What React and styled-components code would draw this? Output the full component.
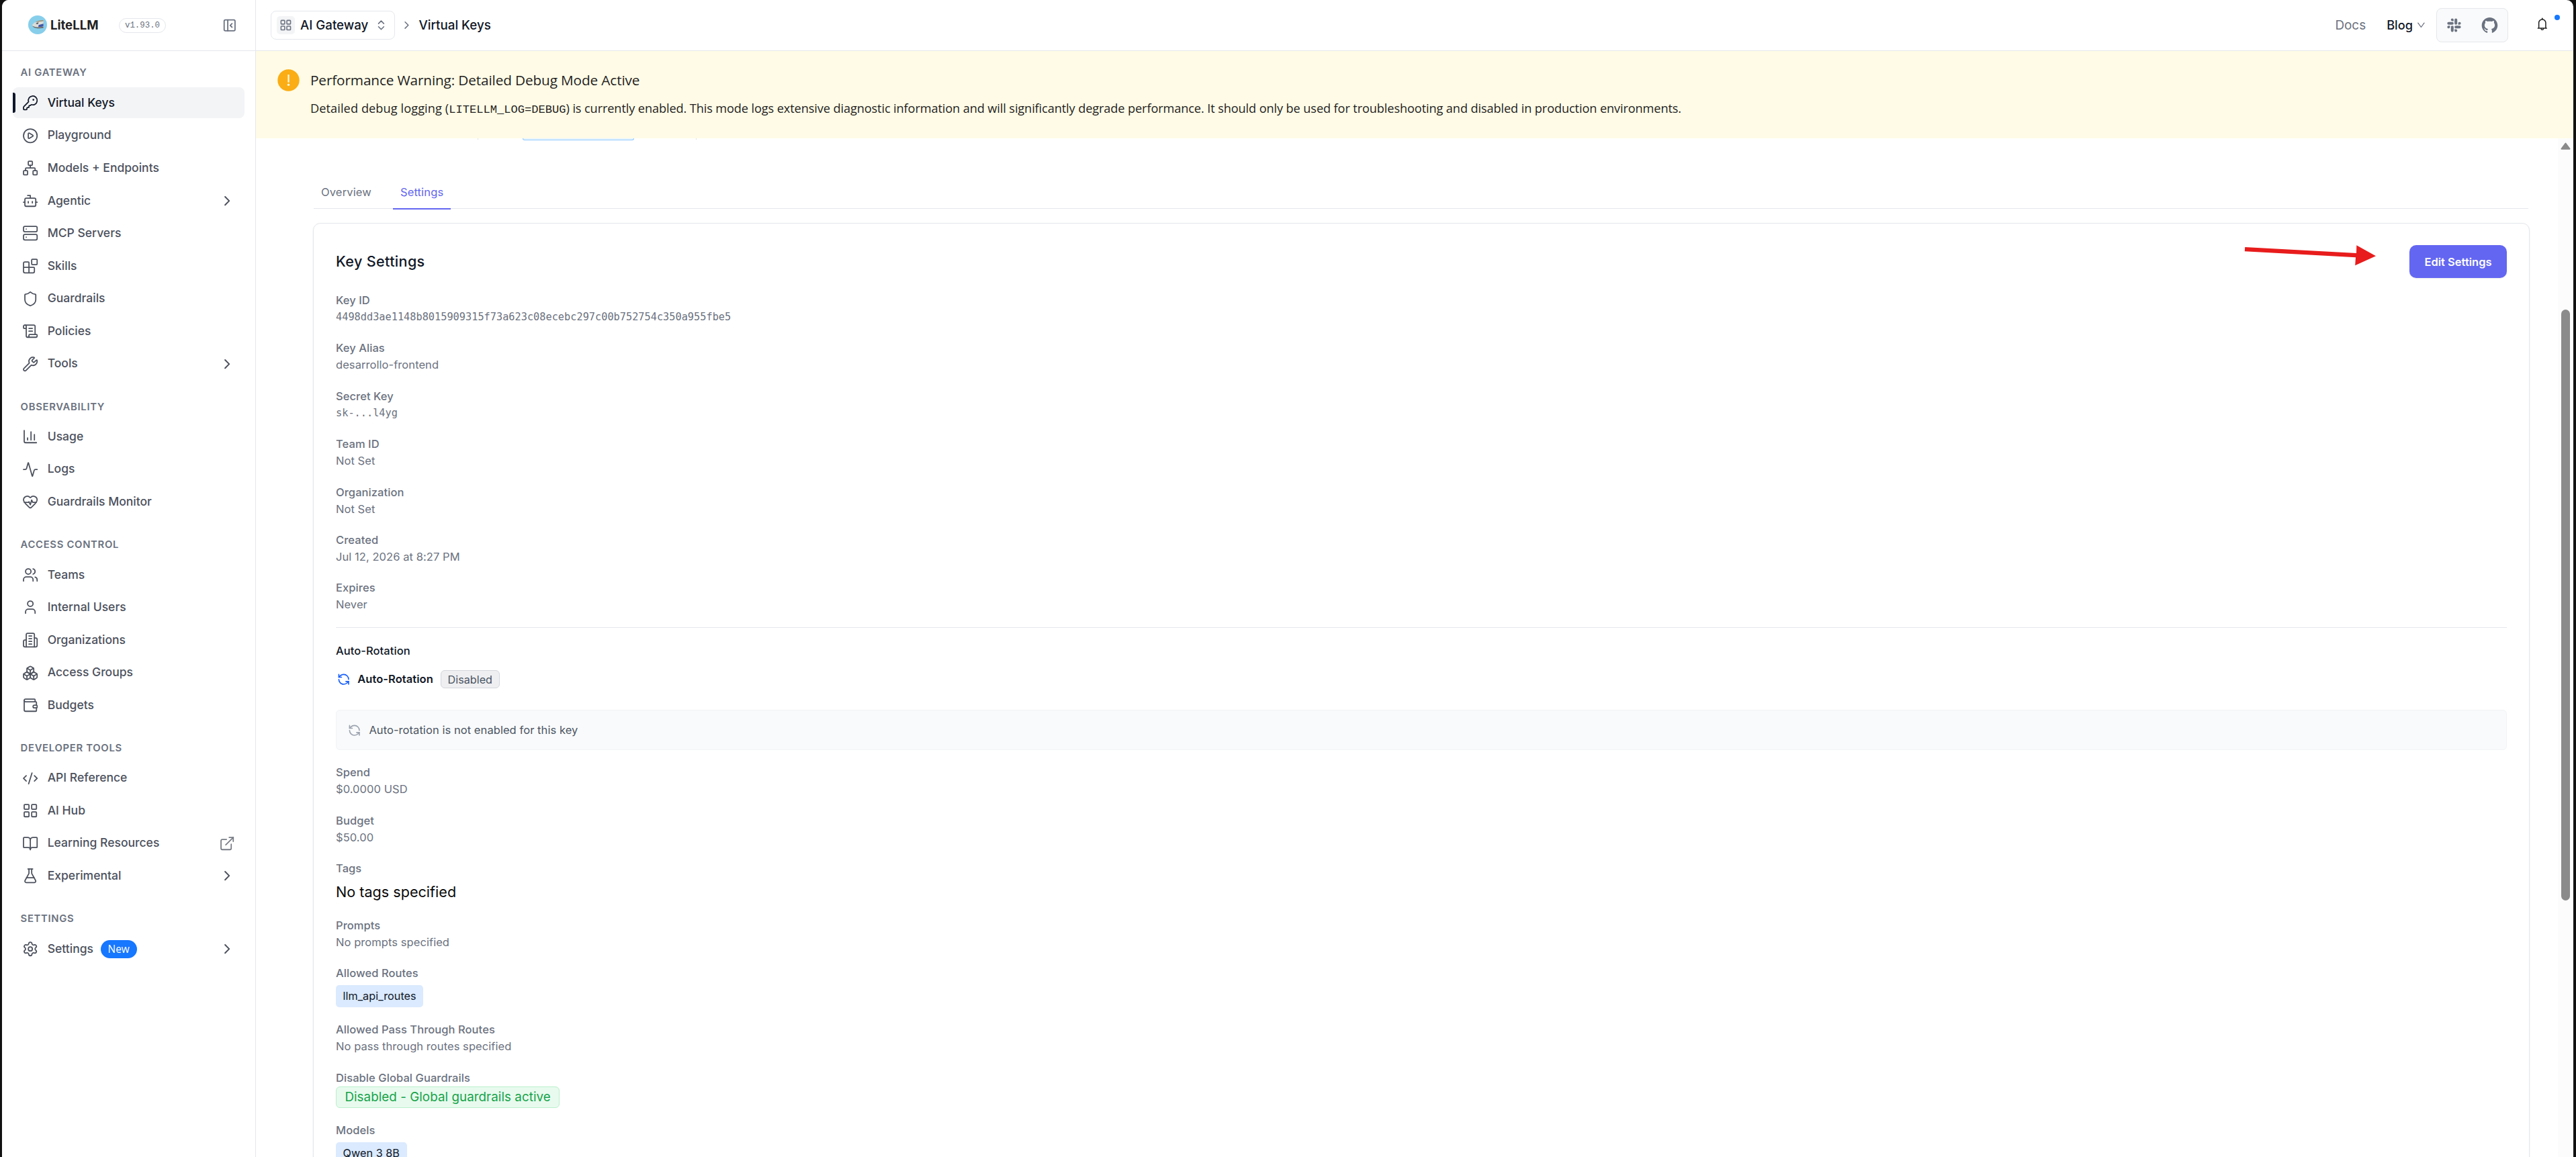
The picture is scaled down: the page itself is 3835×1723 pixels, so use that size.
import React from "react";
import styled, { createGlobalStyle, css } from "styled-components";
import {
  Activity,
  BookOpen,
  Blocks,
  Bot,
  Boxes,
  ChevronRight,
  ChevronsUpDown,
  CirclePlay,
  CodeXml,
  ExternalLink,
  FlaskConical,
  HeartPulse,
  KeyRound,
  LayoutGrid,
  Network,
  PanelLeftClose,
  RefreshCcw,
  ScrollText,
  Server,
  Settings,
  Shield,
  User,
  Users,
  Wallet,
  Wrench,
} from "lucide-react";
import { AiFillGithub, AiOutlineBell, AiOutlineDown, AiOutlineSlack } from "react-icons/ai";

const inter = `Inter, "Liberation Sans", sans-serif`;
const humanist = `"Open Sans", "Noto Sans", sans-serif`;
const mono = `"DejaVu Sans Mono", "Liberation Mono", monospace`;

const c = {
  line: "#e5e7eb",
  ink: "#111827",
  nav: "#4c515d",
  body: "#4b5563",
  muted: "#6b7280",
  accent: "#6366f1",
  blue: "#1677ff",
};

const GlobalStyle = createGlobalStyle`
  *, *::before, *::after { box-sizing: border-box; }
  html { background: #111; }
  body {
    margin: 0;
    font-family: ${inter};
    color: ${c.ink};
  }
  svg { display: block; flex: none; }
`;

/* ---------- Window ---------- */

const Desktop = styled.div`
  width: 3835px;
  height: 1723px;
  padding: 0 4px 0 3px;
  background: #111;
  overflow: hidden;
`;

const Window = styled.div`
  display: flex;
  width: 100%;
  height: 100%;
  background: #fff;
  border-radius: 10px 10px 0 0;
  overflow: hidden;
`;

/* ---------- Sidebar ---------- */

const Sidebar = styled.aside`
  flex: none;
  width: 378px;
  height: 100%;
  border-right: 1px solid ${c.line};
  background: #fff;
`;

const SidebarHeader = styled.header`
  display: flex;
  align-items: center;
  height: 76px;
  padding: 0 27px 0 39px;
  border-bottom: 1px solid ${c.line};
`;

const Brand = styled.div`
  display: flex;
  align-items: center;
  gap: 5px;
  width: 135px;
  height: 28px;
  margin-bottom: 1px;
  font-size: 18.6px;
  font-weight: 700;
  letter-spacing: -0.02px;
  color: #222;
`;

const Version = styled.span`
  display: flex;
  align-items: center;
  justify-content: center;
  width: 70px;
  height: 22px;
  border: 1px solid ${c.line};
  border-radius: 11px;
  font-family: "Liberation Mono", monospace;
  font-size: 12.4px;
  color: ${c.muted};
`;

const Collapse = styled.span`
  margin-left: auto;
  color: ${c.muted};
`;

const Nav = styled.nav`
  display: flex;
  flex-direction: column;
  gap: 21.6px;
  padding: 13.4px 16px 0 16.2px;
`;

const NavGroup = styled.section`
  display: flex;
  flex-direction: column;
`;

const NavLabel = styled.h2`
  margin: 0;
  padding: 8.1px 0 10.8px 11.4px;
  font-size: 14.85px;
  line-height: 22.1px;
  font-weight: 600;
  letter-spacing: 0.68px;
  color: ${c.muted};
`;

const NavItems = styled.div`
  display: flex;
  flex-direction: column;
  gap: 2.7px;
`;

const NavItem = styled.a`
  position: relative;
  display: flex;
  align-items: center;
  gap: 13.7px;
  height: 45.9px;
  padding: 0 13.5px;
  border-radius: 8px;
  font-size: 17.55px;
  font-weight: 500;
  color: ${(p) => (p.$active ? c.ink : c.nav)};
  background: ${(p) => (p.$active ? "#f3f4f6" : "transparent")};

  ${(p) =>
    p.$active &&
    css`
      &::before {
        content: "";
        position: absolute;
        left: 0;
        top: 8px;
        bottom: 8px;
        width: 4px;
        border-radius: 0 3px 3px 0;
        background: #0f172a;
      }
    `}
`;

const NavText = styled.span`
  padding-bottom: 2px;
`;

const NavTail = styled.span`
  margin-left: auto;
  opacity: ${(p) => (p.$dim ? 0.75 : 1)};
`;

const NewBadge = styled.span`
  display: flex;
  align-items: center;
  justify-content: center;
  width: 54px;
  height: 27px;
  margin-left: -3px;
  border-radius: 14px;
  font-family: ${humanist};
  font-size: 15.4px;
  font-weight: 400;
  color: #fff;
  background: ${c.blue};
`;

/* ---------- Top bar ---------- */

const Main = styled.div`
  display: flex;
  flex-direction: column;
  flex: 1;
  min-width: 0;
  height: 100%;
`;

const TopBar = styled.header`
  flex: none;
  display: flex;
  align-items: center;
  height: 76px;
  padding: 0 20px 0 22px;
  border-bottom: 1px solid ${c.line};
`;

const Switcher = styled.button`
  display: flex;
  align-items: center;
  width: 185px;
  height: 43px;
  padding: 0 10px 0 8px;
  border: 1px solid ${c.line};
  border-radius: 8px;
  background: #fff;
  font-family: inherit;
  font-size: 18.7px;
  font-weight: 500;
  color: ${c.ink};

  & > svg { margin-left: auto; color: ${c.muted}; }
`;

const Tile = styled.span`
  display: flex;
  align-items: center;
  justify-content: center;
  width: 27px;
  height: 27px;
  margin-right: 8px;
  border-radius: 5px;
  background: #f3f4f6;
  color: ${c.muted};
`;

const Crumb = styled.span`
  display: flex;
  align-items: center;
  gap: 8.5px;
  margin-left: 8px;
  font-size: 18.8px;
  font-weight: 500;
  color: ${c.ink};

  & > svg { color: ${c.muted}; }
`;

const TopActions = styled.div`
  display: flex;
  align-items: center;
  margin-left: auto;
`;

const DocsLink = styled.a`
  font-size: 18.9px;
  color: ${c.muted};
`;

const BlogLink = styled.a`
  display: flex;
  align-items: center;
  gap: 5px;
  margin: 0 15.7px 2px 31px;
  font-size: 18.2px;
  font-weight: 500;
  color: ${c.ink};

  & > svg { margin-top: 2px; color: ${c.muted}; }
`;

const Social = styled.div`
  display: flex;
  align-items: center;
  justify-content: space-between;
  width: 107px;
  height: 51px;
  padding: 0 13px 0 12px;
  border: 1px solid ${c.line};
  border-radius: 8px;
  background: #f9fafb;
  color: ${c.muted};
`;

const Bell = styled.span`
  position: relative;
  margin: 0 15px 4px 40px;
  color: #1f1f1f;

  &::after {
    content: "";
    position: absolute;
    left: 29px;
    top: -3px;
    width: 8px;
    height: 8px;
    border-radius: 50%;
    background: ${c.blue};
  }
`;

/* ---------- Warning banner ---------- */

const Banner = styled.section`
  flex: none;
  display: flex;
  gap: 16px;
  height: 130px;
  padding: 27px 32px;
  background: #fffbe6;
  font-family: ${humanist};
  color: #1f1f1f;
`;

const BannerTitle = styled.h1`
  margin: 0 0 11px;
  font-size: 20.8px;
  line-height: 32px;
  font-weight: 400;
  letter-spacing: -0.15px;
`;

const BannerText = styled.p`
  margin: 0;
  font-size: 18.2px;
  line-height: 30px;
  letter-spacing: -0.12px;
  white-space: nowrap;

  code {
    font-family: "Liberation Mono", monospace;
    font-size: 17.1px;
    line-height: 1;
    letter-spacing: 0;
  }
`;

const BannerLead = styled.span`
  letter-spacing: 0.07px;
`;

/* ---------- Content ---------- */

const Scroller = styled.div`
  display: flex;
  flex: 1;
  min-height: 0;
`;

const Page = styled.main`
  flex: 1;
  min-width: 0;
  padding: 0 42px 0 85px;
`;

const ScrolledRow = styled.div`
  display: flex;
  align-items: flex-start;
  height: 58px;
  padding-left: 245px;
`;

const Tick = styled.span`
  width: 1px;
  height: 2px;
  background: #e0e0e0;
`;

const ScrolledTag = styled.span`
  width: 166px;
  height: 3px;
  margin: 0 92px 0 66px;
  border: 1px solid #91caff;
  border-top: 0;
  border-radius: 0 0 5px 5px;
  background: #e6f4ff;
`;

const Tabs = styled.div`
  display: flex;
  align-items: flex-start;
  height: 47px;
  margin: 0 2px 0 1px;
  border-bottom: 1px solid ${c.line};
`;

const Tab = styled.button`
  height: 48px;
  margin-right: ${(p) => (p.$active ? 0 : "21px")};
  padding: 0 11px 2px;
  border: 0;
  border-bottom: 2px solid ${(p) => (p.$active ? c.accent : "transparent")};
  background: none;
  font-family: inherit;
  font-size: 16.54px;
  font-weight: 400;
  line-height: 44px;
  letter-spacing: 0.13px;
  color: ${(p) => (p.$active ? c.accent : c.muted)};
`;

const Card = styled.section`
  height: 1600px;
  margin-top: 21px;
  padding: 32px 33px;
  border: 1px solid ${c.line};
  border-radius: 11px;
  background: #fff;
  box-shadow: 0 1px 3px rgba(0, 0, 0, 0.06);
  letter-spacing: 0.05px;
`;

const CardHeader = styled.div`
  display: flex;
  align-items: center;
  justify-content: space-between;
  height: 49px;
  margin-bottom: 21px;
`;

const CardTitle = styled.h2`
  margin: 0;
  padding-bottom: 2px;
  font-size: 21.6px;
  font-weight: 500;
  letter-spacing: 0.33px;
`;

const PrimaryButton = styled.button`
  width: 145px;
  height: 49px;
  padding: 0;
  border: 0;
  border-radius: 10px;
  background: ${c.accent};
  box-shadow: 0 1px 2px rgba(0, 0, 0, 0.08);
  font-family: inherit;
  font-size: 16.54px;
  font-weight: 600;
  color: #fff;
`;

const Fields = styled.div`
  display: flex;
  flex-direction: column;
  gap: 21.4px;
`;

const FieldBox = styled.div`
  display: flex;
  flex-direction: column;
  align-items: flex-start;
  line-height: 25px;
`;

const FieldLabel = styled.span`
  font-size: 16.54px;
  font-weight: 500;
  color: ${c.muted};
`;

const FieldValue = styled.span`
  font-family: ${(p) => (p.$mono ? mono : "inherit")};
  font-size: ${(p) => (p.$mono ? "15.27px" : "16.54px")};
  letter-spacing: ${(p) => (p.$mono ? "0" : "inherit")};
  color: ${c.muted};
`;

const PlainValue = styled.span`
  margin-top: 5.6px;
  font-size: 21.6px;
  line-height: 32.4px;
  letter-spacing: 0;
  color: #0a0a0a;
`;

const BlueTag = styled.span`
  height: 33px;
  margin-top: 5px;
  padding: 0 10.5px;
  border-radius: 5px;
  background: #dbeafe;
  font-size: 16.2px;
  line-height: 33px;
  color: ${c.ink};
`;

const GreenTag = styled.span`
  height: 32px;
  padding: 0 12.4px;
  border: 1px solid #b9f0cb;
  border-radius: 6px;
  background: #e8faee;
  font-size: 18.8px;
  line-height: 30px;
  color: #16a34a;
`;

const Rotation = styled.section`
  margin: 21px 0;
  border-top: 1px solid ${c.line};
  padding-top: 21.6px;
`;

const RotationTitle = styled.h3`
  margin: 0 0 16.4px;
  font-size: 16.54px;
  line-height: 25px;
  font-weight: 500;
`;

const RotationRow = styled.div`
  display: flex;
  align-items: center;
  height: 27px;
  margin-bottom: 32px;
  font-size: 16.54px;
  font-weight: 600;

  & > svg { margin: 0 11.3px 0 1.5px; color: #155dfc; }
  & > svg + span { padding-bottom: 2px; }
`;

const StatusBadge = styled.span`
  display: flex;
  align-items: center;
  justify-content: center;
  width: 88px;
  height: 27px;
  margin-left: 11px;
  border: 1px solid #d3d6dc;
  border-radius: 6px;
  background: #efeff1;
  font-size: 16.2px;
  font-weight: 400;
  letter-spacing: 0;
  color: ${c.body};
`;

const Notice = styled.div`
  display: flex;
  align-items: center;
  gap: 12px;
  height: 60px;
  padding: 0 17px;
  border: 1px solid #f1f3f5;
  border-radius: 6px;
  background: #f9fafb;
  font-size: 16.54px;
  color: ${c.body};

  & > svg { color: #9ca3af; }
`;

const ScrollTrack = styled.div`
  flex: none;
  display: flex;
  flex-direction: column;
  align-items: center;
  width: 23px;
  padding: 6px 0 0 0;
  background: #fcfcfc;
`;

const ScrollThumb = styled.div`
  width: 13px;
  height: 880px;
  margin-top: 238px;
  border-radius: 7px;
  background: #8b8b8b;
`;

const Pointer = styled.svg`
  position: absolute;
  left: 3336px;
  top: 360px;
`;

/* ---------- Pieces ---------- */

function TrainMark() {
  return (
    <svg width="28" height="28" viewBox="0 0 28 28">
      <circle cx="14" cy="14" r="14" fill="#87ceeb" />
      <path d="M5.8 14.8C8 10.5 13 8 22.6 7v10.5c-4 .9-14.6 1.2-16.8-2.7z" fill="#dcdcd8" />
      <path d="M10.5 10.2C13.500 8 18 7.200 22.600 7v1.500c-4 .3-8 .9-12.100 1.700z" fill="#9a8f72" />
      <path d="M11.3 12.300c.9-1.300 2.200-1.900 4.200-2l-.6 2.300c-1.200.5-2.500.3-3.600-.3z" fill="#5c6068" />
      <path d="M15.5 14.200l7.100-2v4.100c-2.400.8-5 1-7.600.9z" fill="#3f57a6" />
      <path d="M6 15.200c3.500 2.600 11 2.900 16.600 1.500v2.100c-6.100 1-14.200.8-16.600-3.600z" fill="#6d6a66" />
    </svg>
  );
}

function WarningMark() {
  return (
    <svg width="33" height="33" viewBox="0 0 33 33">
      <circle cx="16.5" cy="16.5" r="16.2" fill="#faad14" />
      <rect x="15.4" y="8" width="2.2" height="11.8" rx="0.6" fill="#fffbe6" />
      <circle cx="16.5" cy="23.2" r="1.7" fill="#fffbe6" />
    </svg>
  );
}

const NAV = [
  {
    label: "AI GATEWAY",
    items: [
      { icon: KeyRound, text: "Virtual Keys", active: true },
      { icon: CirclePlay, text: "Playground" },
      { icon: Network, text: "Models + Endpoints" },
      { icon: Bot, text: "Agentic", tail: "chevron" },
      { icon: Server, text: "MCP Servers" },
      { icon: Blocks, text: "Skills" },
      { icon: Shield, text: "Guardrails" },
      { icon: ScrollText, text: "Policies" },
      { icon: Wrench, text: "Tools", tail: "chevron" },
    ],
  },
  {
    label: "OBSERVABILITY",
    items: [
      { icon: UsageIcon, text: "Usage" },
      { icon: Activity, text: "Logs" },
      { icon: HeartPulse, text: "Guardrails Monitor" },
    ],
  },
  {
    label: "ACCESS CONTROL",
    items: [
      { icon: Users, text: "Teams" },
      { icon: User, text: "Internal Users" },
      { icon: BuildingIcon, text: "Organizations" },
      { icon: Boxes, text: "Access Groups" },
      { icon: WalletIcon, text: "Budgets" },
    ],
  },
  {
    label: "DEVELOPER TOOLS",
    items: [
      { icon: CodeXml, text: "API Reference" },
      { icon: LayoutGrid, text: "AI Hub" },
      { icon: BookOpen, text: "Learning Resources", tail: "external" },
      { icon: FlaskConical, text: "Experimental", tail: "chevron" },
    ],
  },
  {
    label: "SETTINGS",
    items: [{ icon: Settings, text: "Settings", badge: "New", tail: "chevron" }],
  },
];

function Glyph({ size, strokeWidth, children }) {
  return (
    <svg
      width={size}
      height={size}
      viewBox="0 0 24 24"
      fill="none"
      stroke="currentColor"
      strokeWidth={strokeWidth}
      strokeLinecap="round"
      strokeLinejoin="round"
    >
      {children}
    </svg>
  );
}

function UsageIcon(props) {
  return (
    <Glyph {...props}>
      <path d="M3 3v16a2 2 0 0 0 2 2h16" />
      <path d="M18 17V9" />
      <path d="M13 17V5" />
      <path d="M8 17v-3" />
    </Glyph>
  );
}

function BuildingIcon(props) {
  return (
    <Glyph {...props}>
      <path d="M10 6h4" />
      <path d="M10 10h4" />
      <path d="M10 14h4" />
      <path d="M10 18h4" />
      <path d="M6 22V4a2 2 0 0 1 2-2h8a2 2 0 0 1 2 2v18Z" />
      <path d="M6 12H4a2 2 0 0 0-2 2v6a2 2 0 0 0 2 2h2" />
      <path d="M18 9h2a2 2 0 0 1 2 2v9a2 2 0 0 1-2 2h-2" />
    </Glyph>
  );
}

function WalletIcon(props) {
  return <Wallet {...props} />;
}

function Field({ label, value, monospace, children }) {
  return (
    <FieldBox>
      <FieldLabel>{label}</FieldLabel>
      {children || <FieldValue $mono={monospace}>{value}</FieldValue>}
    </FieldBox>
  );
}

function SidebarNav() {
  return (
    <Nav>
      {NAV.map((group) => (
        <NavGroup key={group.label}>
          <NavLabel>{group.label}</NavLabel>
          <NavItems>
            {group.items.map(({ icon: Icon, text, active, tail, badge }) => (
              <NavItem key={text} $active={active}>
                <Icon size={24.3} strokeWidth={1.75} />
                <NavText>{text}</NavText>
                {badge && <NewBadge>{badge}</NewBadge>}
                {tail && (
                  <NavTail $dim={tail === "external"}>
                    {tail === "external" ? (
                      <ExternalLink size={24.3} strokeWidth={1.75} />
                    ) : (
                      <ChevronRight size={24.3} strokeWidth={2} />
                    )}
                  </NavTail>
                )}
              </NavItem>
            ))}
          </NavItems>
        </NavGroup>
      ))}
    </Nav>
  );
}

export default function App() {
  return (
    <Desktop>
      <GlobalStyle />
      <Window>
        <Sidebar>
          <SidebarHeader>
            <Brand>
              <TrainMark />
              <span>LiteLLM</span>
            </Brand>
            <Version>v1.93.0</Version>
            <Collapse>
              <PanelLeftClose size={21.6} strokeWidth={2} />
            </Collapse>
          </SidebarHeader>
          <SidebarNav />
        </Sidebar>

        <Main>
          <TopBar>
            <Switcher>
              <Tile>
                <LayoutGrid size={18.9} strokeWidth={2} />
              </Tile>
              <span>AI Gateway</span>
              <ChevronsUpDown size={18.9} strokeWidth={2} />
            </Switcher>
            <Crumb>
              <ChevronRight size={18.9} strokeWidth={2} />
              <span>Virtual Keys</span>
            </Crumb>
            <TopActions>
              <DocsLink>Docs</DocsLink>
              <BlogLink>
                Blog
                <AiOutlineDown size={14.8} />
              </BlogLink>
              <Social>
                <AiOutlineSlack size={27} />
                <AiFillGithub size={27} />
              </Social>
              <Bell>
                <AiOutlineBell size={21.6} />
              </Bell>
            </TopActions>
          </TopBar>

          <Banner>
            <WarningMark />
            <div>
              <BannerTitle>Performance Warning: Detailed Debug Mode Active</BannerTitle>
              <BannerText>
                <BannerLead>Detailed debug logging (</BannerLead>
                <code>LITELLM_LOG=DEBUG</code>) is currently enabled. This mode logs extensive
                diagnostic information and will significantly degrade performance. It should only be
                used for troubleshooting and disabled in production environments.
              </BannerText>
            </div>
          </Banner>

          <Scroller>
            <Page>
              <ScrolledRow>
                <Tick />
                <ScrolledTag />
                <Tick />
              </ScrolledRow>
              <Tabs>
                <Tab>Overview</Tab>
                <Tab $active>Settings</Tab>
              </Tabs>
              <Card>
                <CardHeader>
                  <CardTitle>Key Settings</CardTitle>
                  <PrimaryButton>Edit Settings</PrimaryButton>
                </CardHeader>
                <Fields>
                  <Field
                    label="Key ID"
                    value="4498dd3ae1148b8015909315f73a623c08ecebc297c00b752754c350a955fbe5"
                    monospace
                  />
                  <Field label="Key Alias" value="desarrollo-frontend" />
                  <Field label="Secret Key" value="sk-...l4yg" monospace />
                  <Field label="Team ID" value="Not Set" />
                  <Field label="Organization" value="Not Set" />
                  <Field label="Created" value="Jul 12, 2026 at 8:27 PM" />
                  <Field label="Expires" value="Never" />
                </Fields>
                <Rotation>
                  <RotationTitle>Auto-Rotation</RotationTitle>
                  <RotationRow>
                    <RefreshCcw size={19.4} strokeWidth={2} />
                    <span>Auto-Rotation</span>
                    <StatusBadge>Disabled</StatusBadge>
                  </RotationRow>
                  <Notice>
                    <RefreshCcw size={19.4} strokeWidth={2} />
                    <span>Auto-rotation is not enabled for this key</span>
                  </Notice>
                </Rotation>
                <Fields>
                  <Field label="Spend" value="$0.0000 USD" />
                  <Field label="Budget" value="$50.00" />
                  <Field label="Tags">
                    <PlainValue>No tags specified</PlainValue>
                  </Field>
                  <Field label="Prompts" value="No prompts specified" />
                  <Field label="Allowed Routes">
                    <BlueTag>llm_api_routes</BlueTag>
                  </Field>
                  <Field label="Allowed Pass Through Routes" value="No pass through routes specified" />
                  <Field label="Disable Global Guardrails">
                    <GreenTag>Disabled - Global guardrails active</GreenTag>
                  </Field>
                  <Field label="Models">
                    <BlueTag>Qwen 3 8B</BlueTag>
                  </Field>
                </Fields>
              </Card>
            </Page>
            <ScrollTrack>
              <svg width="15" height="11" viewBox="0 0 15 11">
                <path
                  d="M7.5 1.500L13.500 9.700H1.500Z"
                  fill="#8b8b8b"
                  stroke="#8b8b8b"
                  strokeWidth="2"
                  strokeLinejoin="round"
                />
              </svg>
              <ScrollThumb />
            </ScrollTrack>
          </Scroller>
        </Main>
      </Window>
      <Pointer width="204" height="40" viewBox="0 0 204 40">
        <path
          d="M6.2 8L172 17L172.300 5.200L201 21.300L170.200 35.200L171 23.200L5.800 14.200Z"
          fill="#e81c1c"
        />
      </Pointer>
    </Desktop>
  );
}
